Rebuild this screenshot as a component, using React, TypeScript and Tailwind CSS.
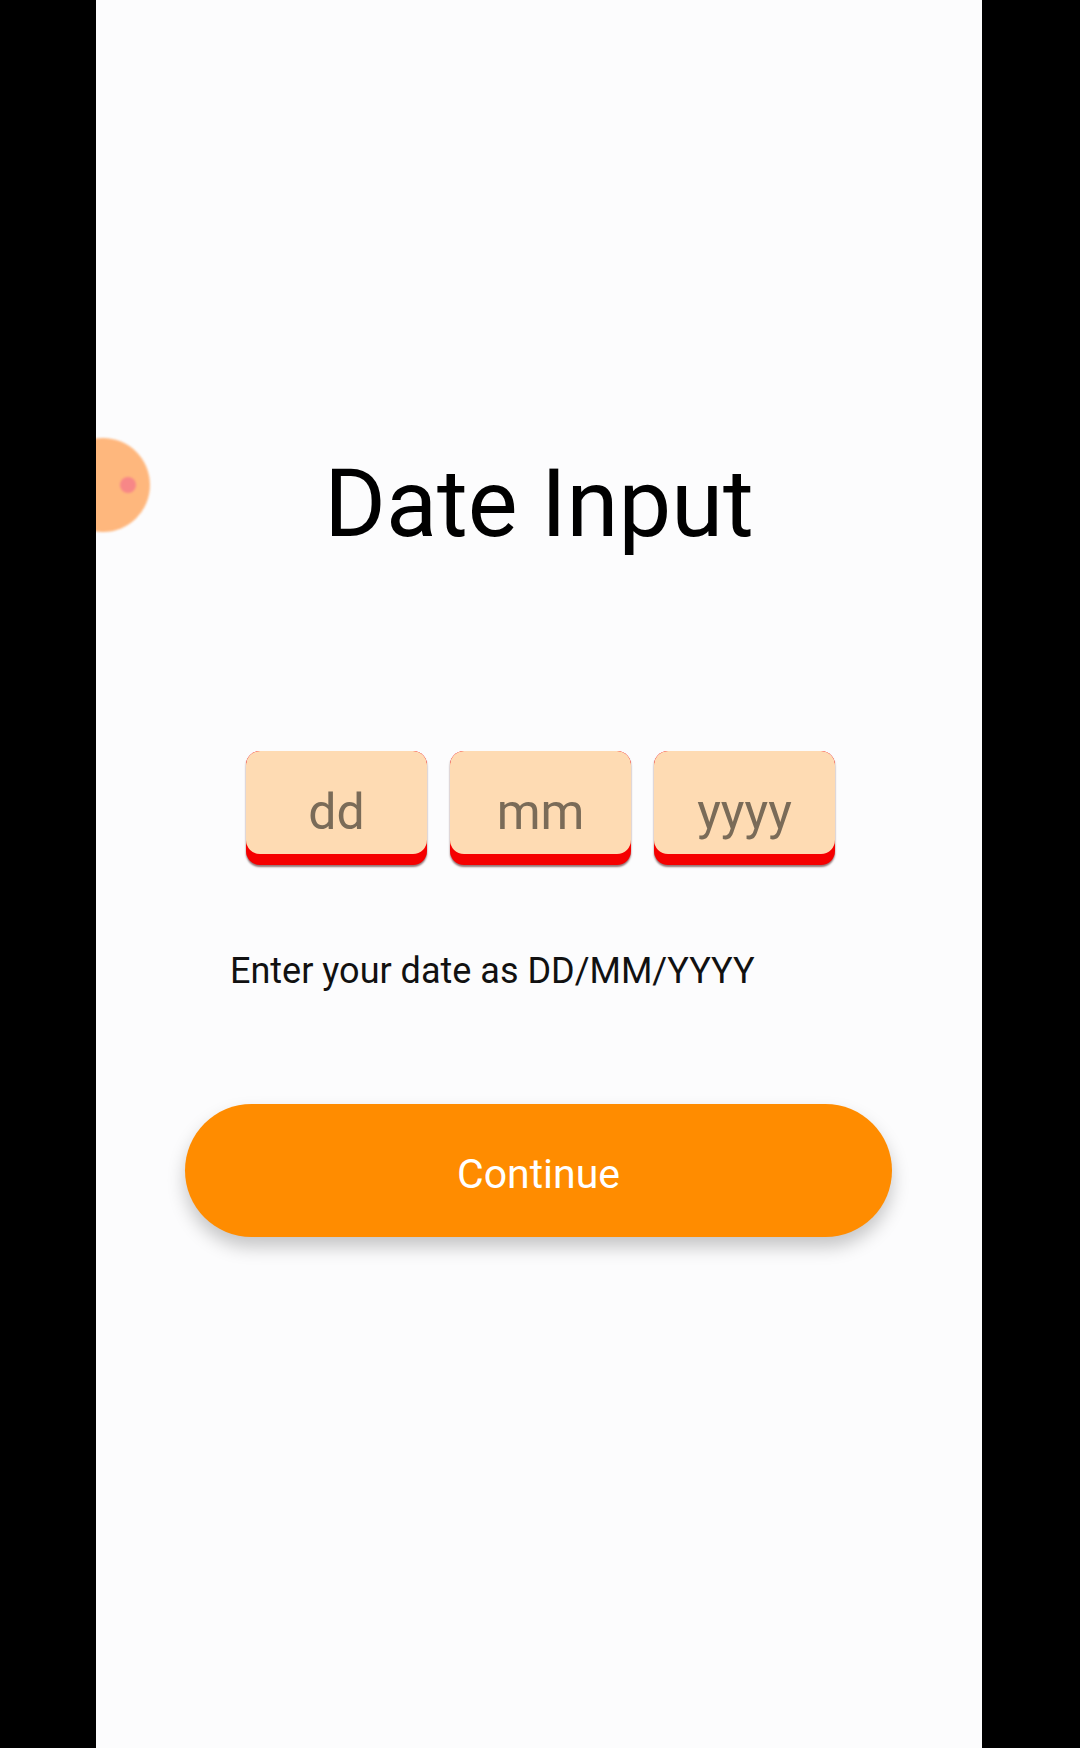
import React from "react";

const font = { fontFamily: "Roboto, 'Noto Sans', sans-serif" };

function Field({ label }: { label: string }) {
  return (
    <div className="relative w-[181px] h-[114px] rounded-[14px] bg-[#f50000] shadow-[0_2px_2px_rgba(60,0,0,0.55)] overflow-hidden">
      <div className="h-[103px] rounded-[14px] bg-[#fedbb3]" />
      <div className="absolute inset-0 flex items-center justify-center pt-[8px]">
        <span className="text-[50px] leading-none text-[#7a6b58]">{label}</span>
      </div>
    </div>
  );
}

export default function App() {
  return (
    <div className="w-[1080px] h-[1748px] bg-black flex" style={font}>
      <div className="ml-[96px] w-[886px] h-[1748px] bg-[#fcfcfd] relative overflow-hidden flex flex-col">
        <div className="absolute left-[-40px] top-[438px] w-[94px] h-[94px] rounded-full bg-[#ffb070] opacity-90 blur-[1px] flex items-center justify-center">
          <div className="ml-[50px] w-[16px] h-[16px] rounded-full bg-[#f77b7b]" />
        </div>

        <h1 className="mt-[457px] text-[94px] leading-none text-black text-center font-normal">
          Date Input
        </h1>

        <div className="mt-[200px] flex justify-center gap-[23px] pl-[3px]">
          <Field label="dd" />
          <Field label="mm" />
          <Field label="yyyy" />
        </div>

        <p className="mt-[88px] ml-[134px] text-[36px] leading-none text-[#111]">
          Enter your date as DD/MM/YYYY
        </p>

        <button className="mt-[115px] ml-[89px] w-[707px] h-[133px] rounded-full bg-[#ff8c00] text-white text-[41px] leading-none pt-[8px] shadow-[0_10px_18px_rgba(0,0,0,0.22)]">
          Continue
        </button>
      </div>
    </div>
  );
}
